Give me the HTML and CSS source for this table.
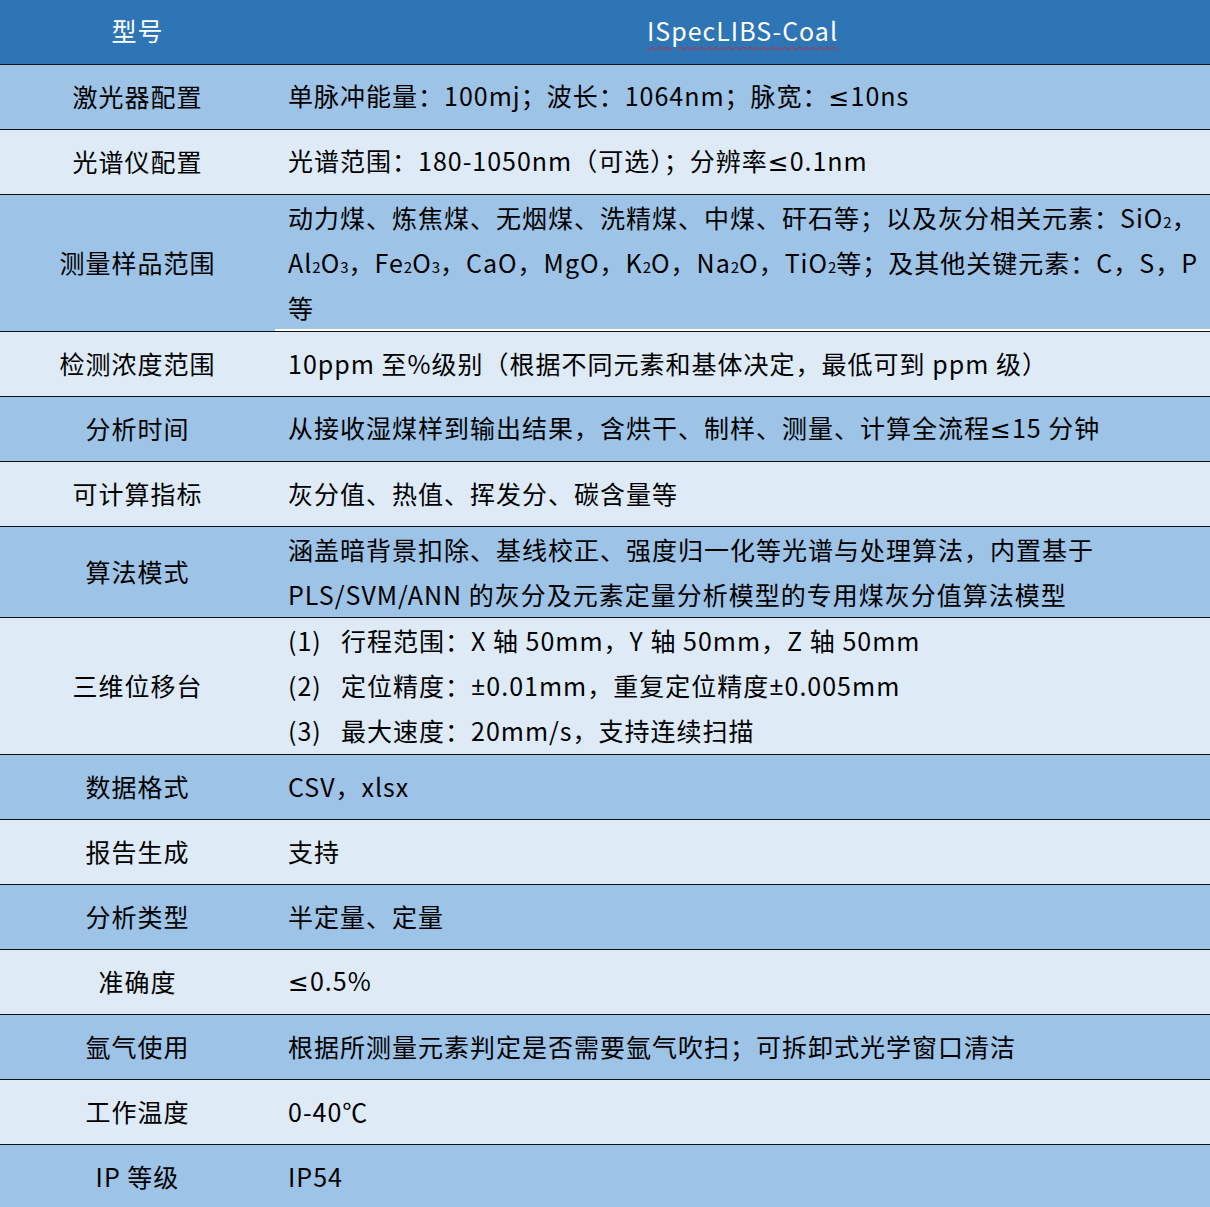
FILE: index.html
```html
<!DOCTYPE html>
<html lang="zh-CN">
<head>
<meta charset="utf-8">
<title>ISpecLIBS-Coal 参数</title>
<link rel="stylesheet" href="styles.css">
</head>
<body>
<table class="spec">
  <thead>
    <tr class="head">
      <th class="label">型号</th>
      <th class="value-head"><span class="spell">ISpecLIBS-Coal</span></th>
    </tr>
  </thead>
  <tbody>
    <tr class="dark"><td class="label">激光器配置</td><td class="value">单脉冲能量：100mj；波长：1064nm；脉宽：<span class="sym">≤</span>10ns</td></tr>
    <tr class="light"><td class="label">光谱仪配置</td><td class="value">光谱范围：180-1050nm（可选）；分辨率<span class="sym">≤</span>0.1nm</td></tr>
    <tr class="dark"><td class="label">测量样品范围</td><td class="value multi three edge">动力煤、炼焦煤、无烟煤、洗精煤、中煤、矸石等；以及灰分相关元素：SiO<sub class="s">2</sub>，<br>Al<sub class="s">2</sub>O<sub class="s">3</sub>，Fe<sub class="s">2</sub>O<sub class="s">3</sub>，CaO，MgO，K<sub class="s">2</sub>O，Na<sub class="s">2</sub>O，TiO<sub class="s">2</sub>等；及其他关键元素：C，S，P<br>等</td></tr>
    <tr class="light"><td class="label">检测浓度范围</td><td class="value">10ppm 至%级别（根据不同元素和基体决定，最低可到 ppm 级）</td></tr>
    <tr class="dark"><td class="label">分析时间</td><td class="value">从接收湿煤样到输出结果，含烘干、制样、测量、计算全流程<span class="sym">≤</span>15 分钟</td></tr>
    <tr class="light"><td class="label">可计算指标</td><td class="value">灰分值、热值、挥发分、碳含量等</td></tr>
    <tr class="dark"><td class="label">算法模式</td><td class="value multi">涵盖暗背景扣除、基线校正、强度归一化等光谱与处理算法，内置基于<br>PLS/SVM/ANN 的灰分及元素定量分析模型的专用煤灰分值算法模型</td></tr>
    <tr class="light"><td class="label">三维位移台</td><td class="value multi three">
      <div class="item"><span class="num">(1)</span>行程范围：X 轴 50mm，Y 轴 50mm，Z 轴 50mm</div>
      <div class="item"><span class="num">(2)</span>定位精度：<span class="sym">±</span>0.01mm，重复定位精度<span class="sym">±</span>0.005mm</div>
      <div class="item"><span class="num">(3)</span>最大速度：20mm/s，支持连续扫描</div>
    </td></tr>
    <tr class="dark"><td class="label">数据格式</td><td class="value">CSV，xlsx</td></tr>
    <tr class="light"><td class="label">报告生成</td><td class="value">支持</td></tr>
    <tr class="dark"><td class="label">分析类型</td><td class="value">半定量、定量</td></tr>
    <tr class="light"><td class="label">准确度</td><td class="value"><span class="sym">≤</span>0.5%</td></tr>
    <tr class="dark"><td class="label">氩气使用</td><td class="value">根据所测量元素判定是否需要氩气吹扫；可拆卸式光学窗口清洁</td></tr>
    <tr class="light"><td class="label">工作温度</td><td class="value">0-40℃</td></tr>
    <tr class="dark"><td class="label">IP 等级</td><td class="value">IP54</td></tr>
  </tbody>
</table>
</body>
</html>
```

FILE: styles.css
```css
html, body {
  margin: 0;
  padding: 0;
  background: #ffffff;
}
body {
  font-family: "Noto Sans CJK SC", "Noto Sans", sans-serif;
  color: #000;
}
.spec {
  width: 1210px;
  border-collapse: collapse;
  table-layout: fixed;
  font-size: 25px;
  letter-spacing: 1px;
}
.spec th, .spec td {
  padding: 0 0 2px 0;
  border-bottom: 1px solid #111;
  vertical-align: middle;
  white-space: nowrap;
}
.spec .label {
  width: 275px;
  text-align: center;
  height: 62px;
}
.spec .head th {
  background: #2e75b6;
  color: #fff;
  font-weight: normal;
  height: 60px;
  padding-bottom: 4px;
}
.value-head {
  text-align: center;
}
.spell {
  text-decoration: underline wavy #e02020;
  text-decoration-thickness: 1px;
  text-underline-offset: 5px;
}
.dark td { background: #9dc3e6; }
.light td { background: #deebf7; }
.value {
  padding-left: 13px !important;
  text-align: left;
  line-height: 45px;
}
.spec .multi {
  padding-bottom: 0;
}
.spec .three {
  padding-bottom: 1px;
}
.sym {
  font-family: "Noto Sans", "DejaVu Sans", sans-serif;
  letter-spacing: 0;
  margin-right: 1px;
}
.s {
  font-size: 15px;
  vertical-align: baseline;
  line-height: 0;
  letter-spacing: 0;
}
.edge {
  box-shadow: inset 0 -2px 0 #ffffff;
}
.item {
  display: flex;
}
.num {
  width: 53px;
}
```
